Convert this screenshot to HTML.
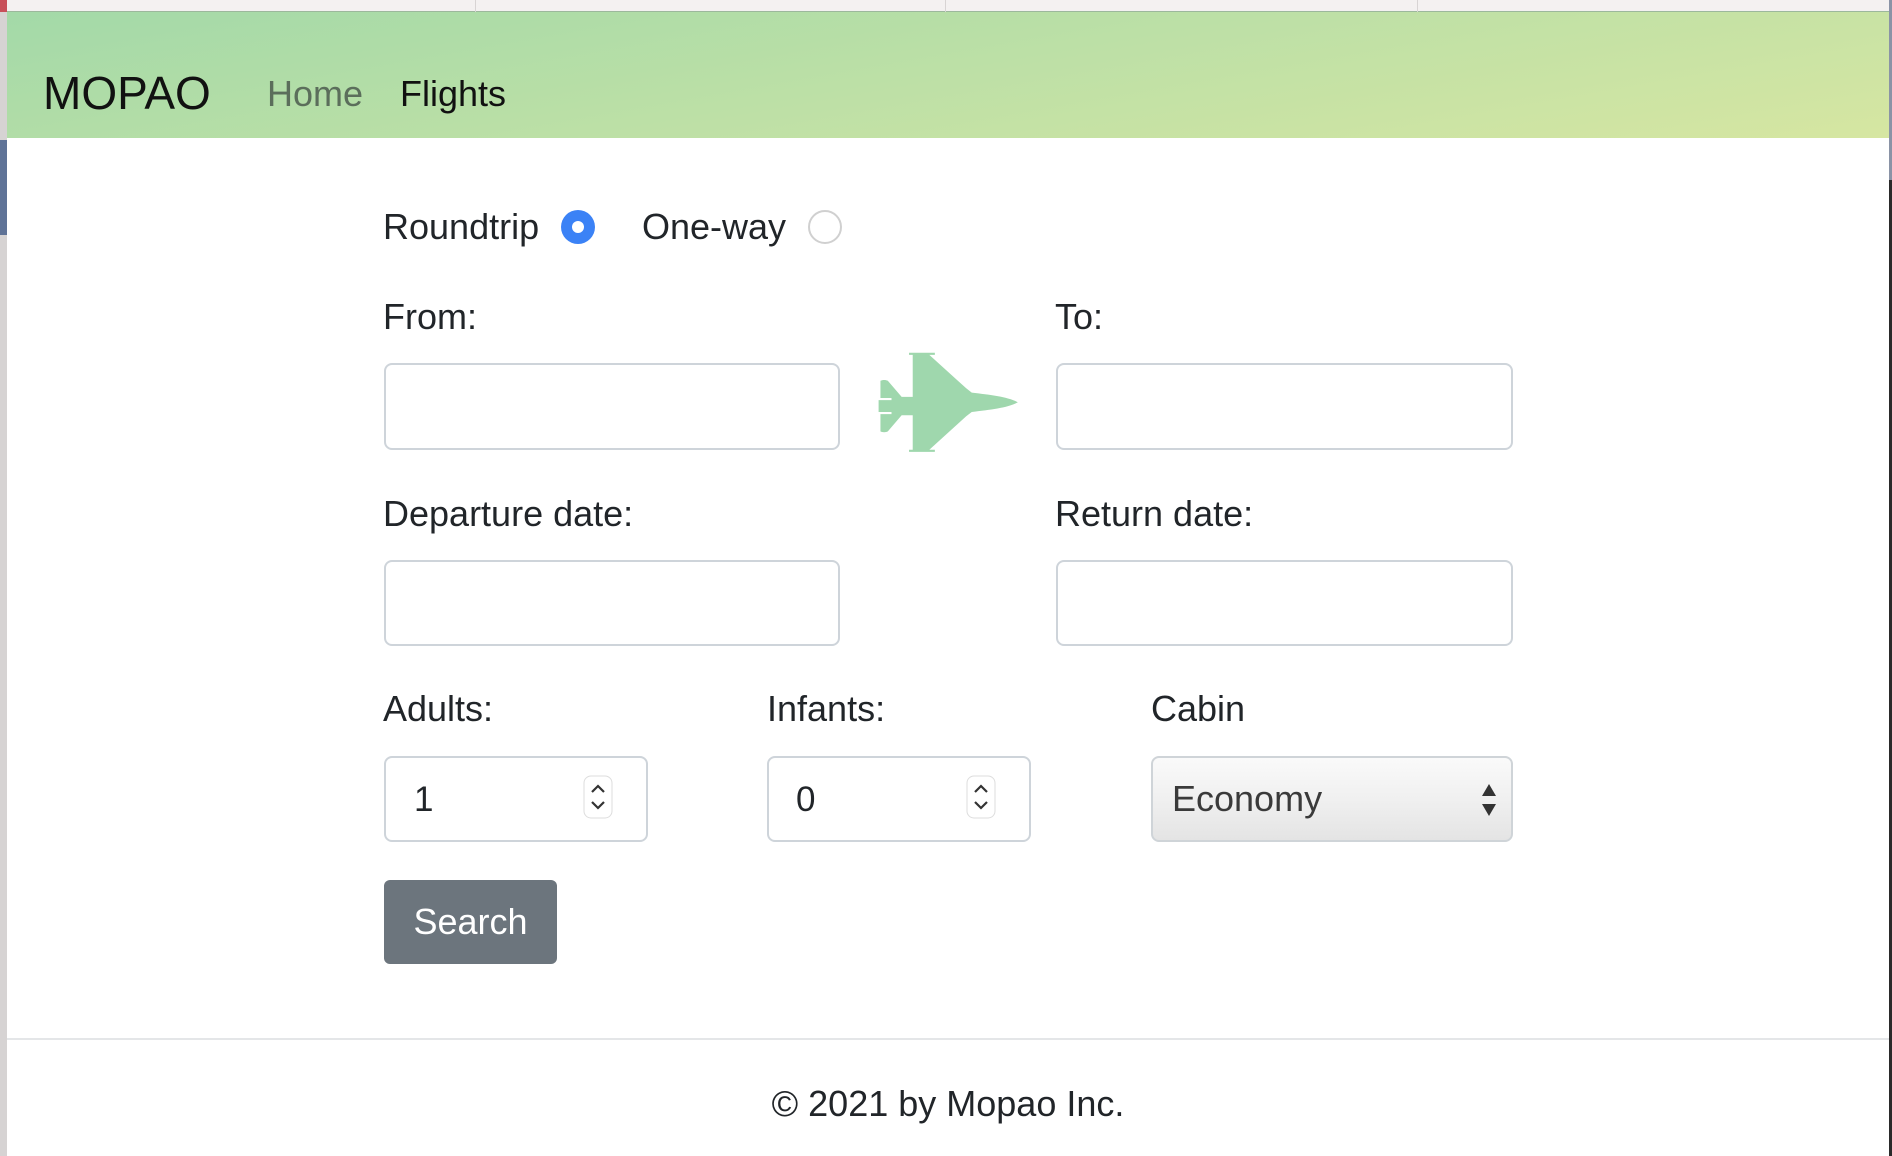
<!DOCTYPE html>
<html><head><meta charset="utf-8"><style>
*{box-sizing:border-box;margin:0;padding:0}
body{width:1892px;height:1156px;position:relative;overflow:hidden;background:#fff;font-family:"Liberation Sans",Arial,sans-serif;color:#212529}
.a{position:absolute}
.lbl{position:absolute;font-size:36px;line-height:40px;color:#212529}
.inp{position:absolute;border:2px solid #ced4da;border-radius:8px;background:#fff}
.radio{position:absolute;width:34px;height:34px;border-radius:50%}
</style></head><body>
<div class="a" style="left:0;top:0;width:1892px;height:12px;background:#f4f1f1;border-bottom:1px solid #9cb89c"></div>
<div class="a" style="left:475px;top:0;width:1px;height:12px;background:#d8d4d4"></div>
<div class="a" style="left:945px;top:0;width:1px;height:12px;background:#d8d4d4"></div>
<div class="a" style="left:1417px;top:0;width:1px;height:12px;background:#d8d4d4"></div>
<div class="a" style="left:0;top:0;width:7px;height:1156px;background:#d6d3d3"></div>
<div class="a" style="left:0;top:0;width:7px;height:12px;background:#c8505a"></div>
<div class="a" style="left:0;top:140px;width:7px;height:95px;background:#5f7397"></div>
<div class="a" style="left:1889px;top:0;width:3px;height:1156px;background:#2a2a2a"></div>
<div class="a" style="left:1889px;top:0;width:3px;height:180px;background:#8a93a6"></div>
<div class="a" style="left:7px;top:12px;width:1882px;height:126px;background:linear-gradient(170deg,#a3d9a8 0%,#bde0a6 50%,#d6e6a2 100%)"></div>
<div class="a" style="left:43px;top:67px;font-size:46px;line-height:52px;color:#111">MOPAO</div>
<div class="a" style="left:267px;top:73px;font-size:36px;line-height:42px;color:#5b6e5b">Home</div>
<div class="a" style="left:400px;top:73px;font-size:36px;line-height:42px;color:#111">Flights</div>

<div class="lbl" style="left:383px;top:207px">Roundtrip</div>
<div class="radio" style="left:561px;top:210px;background:#3b82f6"><div class="a" style="left:11px;top:11px;width:12px;height:12px;border-radius:50%;background:#fff"></div></div>
<div class="lbl" style="left:642px;top:207px">One-way</div>
<div class="radio" style="left:808px;top:210px;border:2px solid #d0d0d0;background:#fff"></div>

<div class="lbl" style="left:383px;top:297px">From:</div>
<div class="lbl" style="left:1055px;top:297px">To:</div>
<div class="inp" style="left:384px;top:363px;width:456px;height:87px"></div>
<div class="inp" style="left:1056px;top:363px;width:457px;height:87px"></div>
<svg class="a" style="left:862px;top:328px" width="166" height="140" viewBox="0 0 180 130" preserveAspectRatio="none">
<path fill="#9fd7ad" d="M51 23h28v2h-6l40 31 6 4c20 2 40 4 50 9-10 5-30 7-50 9l-6 4-40 31h6v2H51v-2h4V81H43L28 96c-2 1-6 1-8 0V80h12v-2H18V67h14v-2H20V49c2-1 6-1 8 0l15 15h12V25h-4z"/>
</svg>

<div class="lbl" style="left:383px;top:494px">Departure date:</div>
<div class="lbl" style="left:1055px;top:494px">Return date:</div>
<div class="inp" style="left:384px;top:560px;width:456px;height:86px"></div>
<div class="inp" style="left:1056px;top:560px;width:457px;height:86px"></div>

<div class="lbl" style="left:383px;top:689px">Adults:</div>
<div class="lbl" style="left:767px;top:689px">Infants:</div>
<div class="lbl" style="left:1151px;top:689px">Cabin</div>
<div class="inp" style="left:384px;top:756px;width:264px;height:86px">
 <div class="a" style="left:28px;top:22px;font-size:35px;line-height:40px">1</div>
 <svg class="a" style="left:197px;top:17px" width="30" height="44" viewBox="0 0 30 44"><rect x="1" y="1" width="28" height="42" rx="7" fill="#fff" stroke="#ddd"/><path d="M9 17l6-6 6 6M9 27l6 6 6-6" fill="none" stroke="#333" stroke-width="2.2"/></svg>
</div>
<div class="inp" style="left:767px;top:756px;width:264px;height:86px">
 <div class="a" style="left:27px;top:22px;font-size:35px;line-height:40px">0</div>
 <svg class="a" style="left:197px;top:17px" width="30" height="44" viewBox="0 0 30 44"><rect x="1" y="1" width="28" height="42" rx="7" fill="#fff" stroke="#ddd"/><path d="M9 17l6-6 6 6M9 27l6 6 6-6" fill="none" stroke="#333" stroke-width="2.2"/></svg>
</div>
<div class="inp" style="left:1151px;top:756px;width:362px;height:86px;background:linear-gradient(#fafafa,#f0f0f0 50%,#e4e4e4);border-color:#cfd4d8">
 <div class="a" style="left:19px;top:21px;font-size:36px;line-height:40px;color:#3a3a3a">Economy</div>
 <svg class="a" style="left:327px;top:24px" width="18" height="36" viewBox="0 0 18 36"><path d="M9 2l7 12H2zM9 34l7-12H2z" fill="#333"/></svg>
</div>

<div class="a" style="left:384px;top:880px;width:173px;height:84px;background:#6c757d;border-radius:6px;color:#fff;font-size:36px;line-height:84px;text-align:center">Search</div>

<div class="a" style="left:7px;top:1038px;width:1882px;height:2px;background:#e4e6e8"></div>
<div class="a" style="left:7px;top:1084px;width:1882px;text-align:center;font-size:36px;line-height:40px">© 2021 by Mopao Inc.</div>
</body></html>
